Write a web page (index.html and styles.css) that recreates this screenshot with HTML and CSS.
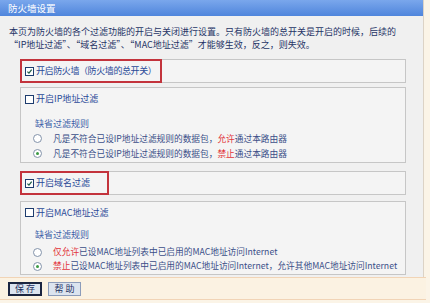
FILE: index.html
```html
<!DOCTYPE html>
<html lang="zh-CN">
<head>
    <meta charset="UTF-8">
    <meta name="viewport" content="width=device-width, initial-scale=1.0">
    <title>防火墙设置</title>
    <link rel="stylesheet" href="styles.css">
</head>
<body>
    <div class="panel">
        <div class="title">防火墙设置</div>
        <p class="intro">本页为防火墙的各个过滤功能的开启与关闭进行设置。只有防火墙的总开关是开启的时候，后续的<br>“IP地址过滤”、“域名过滤”、“MAC地址过滤”才能够生效，反之，则失效。</p>

        <div class="box box-main">
            <div class="row hl"><span class="cb"><svg viewBox="0 0 9 9"><path d="M1.8 4.6 L3.8 6.6 L7.3 2.2"/></svg></span>开启防火墙（防火墙的总开关）</div>
        </div>

        <div class="box box-ip">
            <div class="row"><span class="cb"></span>开启IP地址过滤</div>
            <div class="rules">
                <div class="legend">缺省过滤规则</div>
                <div class="opt"><span class="rd"></span>凡是不符合已设IP地址过滤规则的数据包，<em>允许</em>通过本路由器</div>
                <div class="opt"><span class="rd on"></span>凡是不符合已设IP地址过滤规则的数据包，<em>禁止</em>通过本路由器</div>
            </div>
        </div>

        <div class="box box-domain">
            <div class="row hl"><span class="cb"><svg viewBox="0 0 9 9"><path d="M1.8 4.6 L3.8 6.6 L7.3 2.2"/></svg></span>开启域名过滤</div>
        </div>

        <div class="box box-mac">
            <div class="row"><span class="cb"></span>开启MAC地址过滤</div>
            <div class="rules">
                <div class="legend">缺省过滤规则</div>
                <div class="opt"><span class="rd"></span><em>仅允许</em>已设MAC地址列表中已启用的MAC地址访问Internet</div>
                <div class="opt"><span class="rd on"></span><em>禁止</em>已设MAC地址列表中已启用的MAC地址访问Internet，允许其他MAC地址访问Internet</div>
            </div>
        </div>
    </div>
    <div class="footer">
        <button class="btn btn-default">保 存</button>
        <button class="btn">帮 助</button>
    </div>
</body>
</html>
```

FILE: styles.css
```css
body {
    margin: 0;
    width: 430px;
    height: 303px;
    background-color: #fbf4e7;
    font-family: "Noto Sans CJK SC", "DejaVu Sans", sans-serif;
    font-size: 9px;
    overflow: hidden;
}
.panel {
    width: 423px;
    height: 277px;
    background-color: #f0f0f0;
    border-right: 1px solid #dcd3c6;
    overflow: hidden;
}
.title {
    height: 16px;
    line-height: 16px;
    width: 426px;
    padding-left: 8px;
    box-sizing: border-box;
    background: linear-gradient(#7aa7ec, #4f85dc);
    color: #fff;
    font-size: 9.5px;
}
.intro {
    margin: 9px 0 0;
    padding-left: 9px;
    line-height: 13px;
    color: #1f3466;
    white-space: nowrap;
}
.box {
    margin: 0 17px 0 20px;
    border: 1px solid #c6c6c6;
    background-color: #f4f4f4;
}
.box-main {
    margin-top: 8px;
}
.box-ip {
    margin-top: 4px;
}
.box-domain {
    margin-top: 8px;
}
.box-mac {
    margin-top: 6px;
}
.row {
    display: flex;
    align-items: center;
    height: 20px;
    line-height: 12px;
    padding-left: 4px;
    color: #2a4a98;
    white-space: nowrap;
}
.box-ip .row {
    height: 22px;
}
.box-mac .row {
    height: 21px;
}
.hl {
    width: fit-content;
    margin: -1px 0 -1px -1px;
    padding-left: 3px;
    padding-right: 5px;
    border: 2px solid #c3333c;
}
.box-main .hl {
    letter-spacing: -0.4px;
    padding-right: 4px;
}
.box-domain .hl {
    padding-right: 17px;
}
.cb {
    flex: none;
    width: 9px;
    height: 9px;
    box-sizing: border-box;
    border: 1px solid #1d3c6e;
    background-color: #fff;
    margin-right: 2px;
    display: flex;
}
.cb svg {
    width: 7px;
    height: 7px;
    fill: none;
    stroke: #1f5d46;
    stroke-width: 1.6;
}
.rules {
    padding: 0 0 1px 12px;
}
.legend {
    margin-top: 7px;
    padding-left: 2px;
    line-height: 14px;
    color: #3d5fa8;
}
.box-mac .legend {
    margin-top: 5px;
    margin-bottom: 3px;
}
.opt {
    display: flex;
    align-items: center;
    height: 15px;
    line-height: 12px;
    font-size: 8.7px;
    color: #3b4f88;
    white-space: nowrap;
}
.box-mac .opt {
    height: 14px;
}
.opt em {
    font-style: normal;
    color: #e2343a;
}
.rd {
    flex: none;
    width: 9px;
    height: 9px;
    box-sizing: border-box;
    border: 1px solid #8393aa;
    border-radius: 50%;
    background-color: #fff;
    margin-right: 11px;
    display: flex;
    align-items: center;
    justify-content: center;
}
.rd.on::after {
    content: "";
    width: 3px;
    height: 3px;
    border-radius: 50%;
    background-color: #3c9a44;
}
.footer {
    width: 426px;
    height: 23px;
    border-top: 1px solid #f1d4b6;
    border-bottom: 1px solid #f1d4b6;
    background-color: #fbf2e2;
    display: flex;
    align-items: center;
    gap: 6px;
    padding-left: 8px;
    box-sizing: border-box;
}
.btn {
    height: 14px;
    padding: 0;
    font-family: inherit;
    font-size: 9px;
    line-height: 10px;
    white-space: nowrap;
    color: #1d2f5e;
    background-color: #dce4ef;
    border: 1px solid #8c9cba;
    border-radius: 0;
}
.btn-default {
    border: 2px solid #1b2540;
    width: 34px;
}
.btn + .btn {
    width: 33px;
}
```
